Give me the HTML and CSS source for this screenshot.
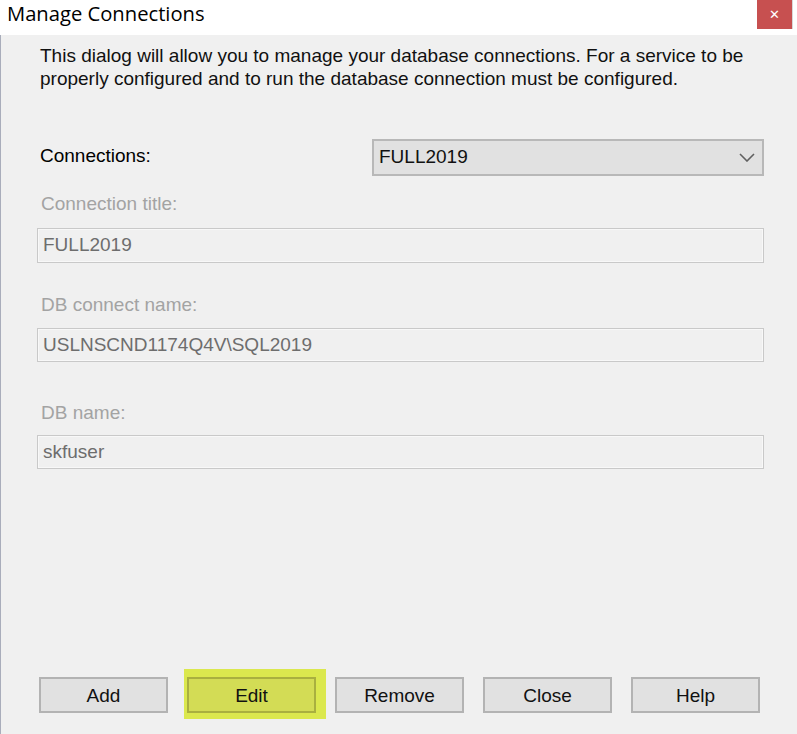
FILE: index.html
```html
<!DOCTYPE html>
<html lang="en">
<head>
<meta charset="utf-8">
<title>Manage Connections</title>
<link rel="stylesheet" href="styles.css">
</head>
<body>
<div class="window">
  <div class="titlebar">
    <span class="title">Manage Connections</span>
    <span class="close">&#x2715;</span>
  </div>
  <div class="client">
    <p class="intro">This dialog will allow you to manage your database connections. For a service to be<br>properly configured and to run the database connection must be configured.</p>
    <div class="conn-row">
      <span class="conn-label">Connections:</span>
      <div class="select">
        <span class="select-value">FULL2019</span>
        <svg class="chevron" width="16" height="9" viewBox="0 0 16 9"><path d="M1 1 L8 8 L15 1" fill="none" stroke="#606060" stroke-width="1.6"/></svg>
      </div>
    </div>
    <div class="field f1">
      <div class="label">Connection title:</div>
      <div class="textbox">FULL2019</div>
    </div>
    <div class="field f2">
      <div class="label">DB connect name:</div>
      <div class="textbox">USLNSCND1174Q4V\SQL2019</div>
    </div>
    <div class="field f3">
      <div class="label">DB name:</div>
      <div class="textbox">skfuser</div>
    </div>
    <div class="spacer"></div>
    <div class="buttons">
      <div class="btn">Add</div>
      <div class="hl"><div class="btn btn-edit">Edit</div></div>
      <div class="btn">Remove</div>
      <div class="btn">Close</div>
      <div class="btn">Help</div>
    </div>
  </div>
</div>
</body>
</html>
```
FILE: styles.css
```css
html, body {
  margin: 0;
  padding: 0;
  background: #f0f0f0;
}
body {
  font-family: "Liberation Sans", Arial, sans-serif;
  font-size: 19px;
  color: #000;
}
.window {
  width: 797px;
  height: 734px;
  display: flex;
  flex-direction: column;
  overflow: hidden;
}
.titlebar {
  height: 35px;
  flex: none;
  background: #fff;
  display: flex;
  align-items: flex-start;
  padding: 0 4px 0 7px;
}
.title {
  font-family: "Open Sans", "Noto Sans", sans-serif;
  font-size: 20.2px;
  line-height: 26px;
  color: #000;
}
.close {
  margin-left: auto;
  width: 35px;
  height: 29px;
  background: #c75050;
  color: #fff;
  font-family: "DejaVu Sans", sans-serif;
  font-size: 13px;
  font-weight: bold;
  display: flex;
  align-items: center;
  justify-content: center;
  border-right: 1px solid #d8d8d8;
}
.client {
  flex: 1;
  display: flex;
  flex-direction: column;
  border-left: 1px solid #a9adbb;
  padding: 0 0 21px 36px;
}
.intro {
  margin: 9px 0 0 3px;
  font-size: 19px;
  line-height: 23px;
  color: #111;
  white-space: nowrap;
}
.conn-row {
  display: flex;
  align-items: center;
  margin-top: 49px;
  width: 727px;
}
.conn-label {
  margin-left: 3px;
  margin-top: -4px;
}
.select {
  margin-left: auto;
  width: 392px;
  height: 37px;
  box-sizing: border-box;
  background: #e1e1e1;
  border: 2px solid #b8b8b8;
  display: flex;
  align-items: center;
  padding: 0 7px 0 5px;
}
.select-value {
  color: #111;
  margin-top: -2px;
}
.chevron {
  margin-left: auto;
}
.label {
  margin-left: 4px;
  line-height: 20px;
  color: #a3a3a3;
}
.textbox {
  box-sizing: border-box;
  width: 727px;
  height: 35px;
  border: 1px solid #c9c9c9;
  box-shadow: inset 0 0 0 1px #f8f8f8;
  background: #f0f0f0;
  line-height: 32px;
  color: #6d6d6d;
  padding-left: 5px;
}
.f1 { margin-top: 18px; }
.f1 .textbox { margin-top: 14px; }
.f2 { margin-top: 32px; }
.f2 .textbox { margin-top: 13px; height: 34px; }
.f3 { margin-top: 41px; }
.f3 .textbox { margin-top: 12px; height: 34px; }
.spacer {
  flex: 1;
}
.buttons {
  display: flex;
  gap: 19px;
  padding-left: 2px;
}
.btn {
  width: 129px;
  height: 36px;
  box-sizing: border-box;
  background: #e1e1e1;
  border: 2px solid #b3b3b3;
  display: flex;
  align-items: center;
  justify-content: center;
  padding-top: 2px;
  color: #111;
}
.hl {
  display: flex;
  background: #dbe84e;
  padding: 8px 10px 6px 3px;
  margin: -8px -10px -6px -3px;
}
.btn-edit {
  background: #d3dc55;
  border-color: #a9b03f;
}
```
